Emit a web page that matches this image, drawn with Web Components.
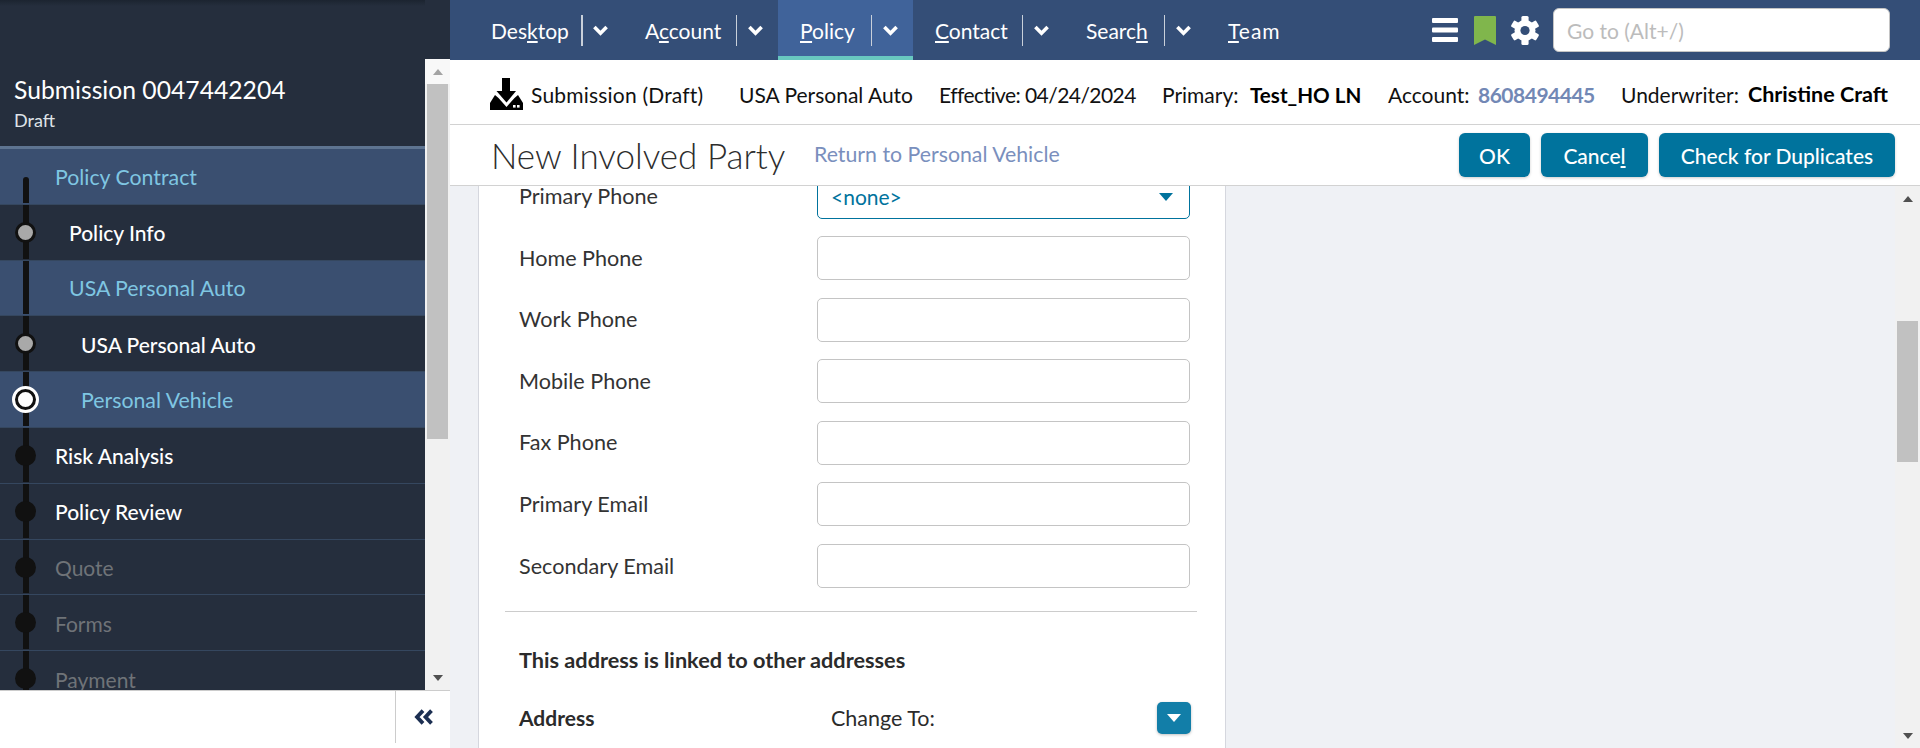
<!DOCTYPE html>
<html>
<head>
<meta charset="utf-8">
<title>New Involved Party</title>
<style>
    html, body{
        margin: 0;
        height: 748px;
        overflow: hidden;
        font-family: Lato, "Liberation Sans", sans-serif;
    }
</style>
</head>
<body>
<app-shell>
    <side-panel slot="side" title-text="Submission 0047442204" sub-text="Draft">
        <nav-step indent="0" state="group" top-cap>Policy Contract</nav-step>
        <nav-step indent="1" dot="done">Policy Info</nav-step>
        <nav-step indent="1" state="group">USA Personal Auto</nav-step>
        <nav-step indent="2" dot="done">USA Personal Auto</nav-step>
        <nav-step indent="2" state="group" dot="current">Personal Vehicle</nav-step>
        <nav-step indent="0" dot="todo">Risk Analysis</nav-step>
        <nav-step indent="0" dot="todo">Policy Review</nav-step>
        <nav-step indent="0" dot="todo" state="off">Quote</nav-step>
        <nav-step indent="0" dot="todo" state="off">Forms</nav-step>
        <nav-step indent="0" dot="todo" state="off">Payment</nav-step>
    </side-panel>

    <top-nav slot="nav">
        <nav-tab menu style="--w:76px"><span>Des<u>k</u>top</span></nav-tab>
        <nav-tab menu style="--w:77px"><span>A<u>c</u>count</span></nav-tab>
        <nav-tab menu active style="--w:57px"><span><u>P</u>olicy</span></nav-tab>
        <nav-tab menu style="--w:73px"><span><u>C</u>ontact</span></nav-tab>
        <nav-tab menu style="--w:64px"><span>Searc<u>h</u></span></nav-tab>
        <nav-tab style="--w:52px"><span style="letter-spacing:1px"><u>T</u>eam</span></nav-tab>
    </top-nav>

    <info-bar slot="info"></info-bar>

    <title-bar slot="title" heading="New Involved Party" link="Return to Personal Vehicle">
        <ui-button style="width:71px">OK</ui-button>
        <ui-button style="width:107px">Cance<u>l</u></ui-button>
        <ui-button style="width:236px">Check for Duplicates</ui-button>
    </title-bar>

    <form-area slot="main">
        <form-row label="Primary Phone" value="&lt;none&gt;" select></form-row>
        <form-row label="Home Phone"></form-row>
        <form-row label="Work Phone"></form-row>
        <form-row label="Mobile Phone"></form-row>
        <form-row label="Fax Phone"></form-row>
        <form-row label="Primary Email"></form-row>
        <form-row label="Secondary Email"></form-row>
    </form-area>
</app-shell>

<script>
// small helper, every element is the same: template -> open shadow root
function makeTemplate(html) {
    const t = document.createElement('template');
    t.innerHTML = html;
    return t;
}

const shellTpl = makeTemplate(`
    <style>
        :host{
            display: grid;
            grid-template-columns: 450px 1fr;
            width: 1920px;
            height: 748px;
            overflow: hidden;
        }
        .right{
            display: flex;
            flex-direction: column;
            height: 748px;
            min-width: 0;
        }
    </style>
    <slot name="side"></slot>
    <div class="right">
        <slot name="nav"></slot>
        <slot name="info"></slot>
        <slot name="title"></slot>
        <slot name="main"></slot>
    </div>
`);

class AppShell extends HTMLElement{
    constructor() {
        super();
        this.attachShadow({ mode: 'open' });
        this.shadowRoot.appendChild(shellTpl.content.cloneNode(true));
    }
}

const sideTpl = makeTemplate(`
    <style>
        :host{
            display: flex;
            flex-direction: column;
            height: 748px;
            width: 450px;
            background: #fff;
        }
        .top{
            display: grid;
            grid-template-columns: 425px 25px;
            height: 690px;
            background: #252e3d;
            overflow: hidden;
        }
        .left{
            height: 690px;
            overflow: hidden;
        }
        .head{
            height: 146px;
            box-sizing: content-box;
            border-bottom: 3px solid #5e7491;
            background: linear-gradient(#1c2430, #252e3d 6px);
            color: #fff;
            display: flex;
            flex-direction: column;
            justify-content: flex-end;
            padding-left: 14px;
        }
        .title{
            font-size: 24.7px;
            line-height: 32px;
            margin-bottom: 2px;
        }
        .sub{
            font-size: 18px;
            line-height: 24px;
            color: #dfe3e8;
            padding-bottom: 14px;
        }
        .gutter{
            margin-top: 59px;
            height: 631px;
        }
        .foot{
            flex: 1;
            border-top: 1px solid #ccc;
            display: flex;
            justify-content: flex-end;
        }
        .collapse{
            width: 55px;
            height: 52px;
            border-left: 1px solid #ccc;
            display: flex;
            align-items: center;
            padding-left: 18px;
            box-sizing: border-box;
        }
        svg{ display: block; }
    </style>
    <div class="top">
        <div class="left">
            <div class="head">
                <div class="title"></div>
                <div class="sub"></div>
            </div>
            <slot></slot>
        </div>
        <div class="gutter">
            <fake-scroll thumb-top="0" thumb-height="355" up-dim bottom-arrow></fake-scroll>
        </div>
    </div>
    <div class="foot">
        <div class="collapse">
            <svg width="20" height="16" viewBox="0 0 20 16" fill="none" stroke="#1c2f52" stroke-width="3.8">
                <polyline points="9,1.6 3,8 9,14.4"/>
                <polyline points="17.5,1.6 11.5,8 17.5,14.4"/>
            </svg>
        </div>
    </div>
`);

class SidePanel extends HTMLElement{
    constructor() {
        super();
        this.attachShadow({ mode: 'open' });
        this.shadowRoot.appendChild(sideTpl.content.cloneNode(true));
        this.shadowRoot.querySelector('.title').innerText = this.getAttribute('title-text');
        this.shadowRoot.querySelector('.sub').innerText = this.getAttribute('sub-text');
    }
}

const stepTpl = makeTemplate(`
    <style>
        :host{
            display: flex;
            align-items: center;
            position: relative;
            height: 54.8px;
            border-bottom: 1px solid #35475f;
            background: #252e3d;
            color: #fff;
            font-size: 21px;
            font-weight: 500;
            padding-left: 55px;
            box-sizing: content-box;
        }
        :host([indent="1"]){ padding-left: 69px; }
        :host([indent="2"]){ padding-left: 81px; }
        :host([state="group"]){
            background: #3a4f70;
            color: #7fc6e2;
            font-weight: 400;
            font-size: 21.3px;
        }
        :host([state="off"]){
            color: #6f7378;
            font-weight: 400;
        }
        /* the timeline line and its dot lie over the row */
        .bar{
            position: absolute;
            left: 23px;
            top: 0;
            bottom: 1px;
            width: 6px;
            background: #111;
        }
        :host([top-cap]) .bar{
            top: 28px;
            border-radius: 3px 3px 0 0;
        }
        .dot{
            display: none;
            position: absolute;
            left: 15px;
            top: 17px;
            width: 21px;
            height: 21px;
            border-radius: 50%;
            background: #111;
            box-sizing: border-box;
        }
        :host([dot]) .dot{ display: block; }
        :host([dot="done"]) .dot{
            background: #a9a9a9;
            border: 3px solid #111;
        }
        :host([dot="current"]) .dot{
            left: 12px;
            top: 14px;
            width: 27px;
            height: 27px;
            background: #fff;
            border: 3px solid #fff;
        }
        :host([dot="current"]) .dot::after{
            content: "";
            display: block;
            width: 21px;
            height: 21px;
            box-sizing: border-box;
            border-radius: 50%;
            border: 3px solid #111;
            background: #fff;
        }
        .txt{ padding-top: 1px; }
    </style>
    <div class="bar"></div>
    <div class="dot"></div>
    <div class="txt"><slot></slot></div>
`);

class NavStep extends HTMLElement{
    constructor() {
        super();
        this.attachShadow({ mode: 'open' });
        this.shadowRoot.appendChild(stepTpl.content.cloneNode(true));
    }
}

const scrollTpl = makeTemplate(`
    <style>
        :host{
            display: flex;
            flex-direction: column;
            height: 100%;
            width: 25px;
            background: #f1f1f1;
        }
        .btn{
            height: 25px;
            display: flex;
            align-items: center;
            justify-content: center;
            flex: none;
            color: #505050;
        }
        .thumb{
            width: 21px;
            margin-left: 2px;
            background: #c1c1c1;
            flex: none;
        }
        .fill{ flex: 1; }
        .tri{
            width: 0;
            height: 0;
            border-left: 5.5px solid transparent;
            border-right: 5.5px solid transparent;
            border-bottom: 6px solid #505050;
        }
        .tri.down{
            border-bottom: 0;
            border-top: 6px solid #505050;
        }
        :host([up-dim]) .up{ border-bottom-color: #a3a3a3; }
        :host([up-dim]) .first{ background: #f8f8f8; }
    </style>
    <div class="btn first"><div class="tri up"></div></div>
    <div class="thumb"></div>
    <div class="fill"></div>
    <div class="btn last"><div class="tri down"></div></div>
`);

class FakeScroll extends HTMLElement{
    constructor() {
        super();
        this.attachShadow({ mode: 'open' });
        this.shadowRoot.appendChild(scrollTpl.content.cloneNode(true));
        const thumb = this.shadowRoot.querySelector('.thumb');
        thumb.style.marginTop = this.getAttribute('thumb-top') + 'px';
        thumb.style.height = this.getAttribute('thumb-height') + 'px';
    }
}

const navTpl = makeTemplate(`
    <style>
        :host{
            display: flex;
            align-items: stretch;
            height: 60px;
            flex: none;
            background: #344e77;
            padding-left: 19px;
            color: #fff;
        }
        .tabs{ display: flex; flex: 1; }
        .tools{
            display: flex;
            align-items: center;
            padding-right: 30px;
        }
        .ham{ margin-right: 16px; }
        .mark{ margin-right: 15px; }
        .gear{ margin-right: 14px; }
        svg{ display: block; }
        input{
            width: 337px;
            height: 44px;
            box-sizing: border-box;
            border: 1px solid #c4c4c4;
            border-radius: 6px;
            background: #fff;
            padding: 0 13px;
            font: 400 21px Lato, "Liberation Sans", sans-serif;
            outline: none;
        }
        input::placeholder{ color: #bcbcbc; opacity: 1; }
    </style>
    <div class="tabs"><slot></slot></div>
    <div class="tools">
        <svg class="ham" width="26" height="24" viewBox="0 0 26 24" fill="#fff">
            <rect y="0" width="26" height="5" rx="1"/>
            <rect y="9.5" width="26" height="5" rx="1"/>
            <rect y="19" width="26" height="5" rx="1"/>
        </svg>
        <svg class="mark" width="22" height="29" viewBox="0 0 22 29">
            <path d="M1 0H21a1 1 0 0 1 1 1V29L11 23.5 0 29V1a1 1 0 0 1 1-1Z" fill="#80b64c"/>
        </svg>
        <svg class="gear" width="28" height="29" viewBox="-14 -14.5 28 29">
            <g fill="#fff">
                <circle r="10.5"/>
                <rect x="-3.6" y="-14.5" width="7.2" height="29" rx="1.5"/>
                <rect x="-3.6" y="-14.5" width="7.2" height="29" rx="1.5" transform="rotate(60)"/>
                <rect x="-3.6" y="-14.5" width="7.2" height="29" rx="1.5" transform="rotate(120)"/>
            </g>
            <circle r="4.6" fill="#344e77"/>
        </svg>
        <input placeholder="Go to (Alt+/)">
    </div>
`);

class TopNav extends HTMLElement{
    constructor() {
        super();
        this.attachShadow({ mode: 'open' });
        this.shadowRoot.appendChild(navTpl.content.cloneNode(true));
    }
}

const tabTpl = makeTemplate(`
    <style>
        :host{
            display: flex;
            align-items: center;
            box-sizing: border-box;
            height: 60px;
            padding: 0 15px 0 22px;
            font-size: 21px;
            font-weight: 400;
            color: #fff;
        }
        :host([active]){
            background: #40639a;
            box-shadow: inset 0 -4px 0 #68c8c0;
        }
        ::slotted(span){
            display: block;
            width: var(--w);
            white-space: nowrap;
        }
        .more{
            display: none;
            align-items: center;
            height: 31px;
            margin-left: 14px;
            padding-left: 11px;
            border-left: 1px solid #c9d0da;
        }
        :host([menu]) .more{ display: flex; }
        :host(:first-child) .more{
            border-left-width: 2px;
            padding-left: 10px;
        }
        svg{ display: block; }
    </style>
    <slot></slot>
    <div class="more">
        <svg width="15" height="11" viewBox="0 0 15 11" fill="none" stroke="#fff" stroke-width="3.6">
            <polyline points="1.4,2 7.5,8.2 13.6,2"/>
        </svg>
    </div>
`);

class NavTab extends HTMLElement{
    constructor() {
        super();
        this.attachShadow({ mode: 'open' });
        this.shadowRoot.appendChild(tabTpl.content.cloneNode(true));
    }
}

const infoTpl = makeTemplate(`
    <style>
        :host{
            display: flex;
            align-items: center;
            flex: none;
            height: 60px;
            padding-top: 4px;
            box-sizing: content-box;
            border-bottom: 1px solid #d2d2d2;
            background: #fff;
            padding-left: 40px;
            font-size: 21px;
            color: #111;
            white-space: nowrap;
        }
        svg{ display: block; margin-right: 8px; }
        span{ display: block; }
        b{ font-weight: 700; color: #000; font-size: 20.6px; }
        a{ color: #7288b5; font-weight: 700; text-decoration: none; letter-spacing: -.5px; }
        .s1{ width: 208px; letter-spacing: .2px; }
        .s2{ width: 200px; }
        .s3{ width: 223px; letter-spacing: -.55px; }
        .s4{ width: 88px; }
        .s5{ width: 138px; }
        .s6{ width: 90px; }
        .s7{ width: 143px; }
        .s8{ width: 127px; }
        .s9 b{ font-size: 21.5px; }
    </style>
    <svg width="33" height="32" viewBox="0 0 33 32">
        <rect x="12" y="0" width="8" height="14" fill="#000"/>
        <polygon points="6.5,13 26,13 16.5,24.5" fill="#000"/>
        <path d="M0 25L5 17 8.5 20 16.5 29 24.5 20 28 17 33 25V32H0Z" fill="#000"/>
        <rect x="23" y="27" width="2.6" height="2.6" fill="#fff"/>
        <rect x="27" y="27" width="2.6" height="2.6" fill="#fff"/>
    </svg>
    <span class="s1">Submission (Draft)</span>
    <span class="s2">USA Personal Auto</span>
    <span class="s3">Effective: 04/24/2024</span>
    <span class="s4">Primary:</span>
    <span class="s5"><b>Test_HO LN</b></span>
    <span class="s6">Account:</span>
    <span class="s7"><a>8608494445</a></span>
    <span class="s8">Underwriter:</span>
    <span class="s9"><b>Christine Craft</b></span>
`);

class InfoBar extends HTMLElement{
    constructor() {
        super();
        this.attachShadow({ mode: 'open' });
        this.shadowRoot.appendChild(infoTpl.content.cloneNode(true));
    }
}

const titleTpl = makeTemplate(`
    <style>
        :host{
            display: flex;
            align-items: center;
            flex: none;
            height: 60px;
            box-sizing: content-box;
            border-bottom: 1px solid #d2d2d2;
            background: #fff;
            padding: 0 25px 0 41px;
        }
        h1{
            margin: 0;
            font-size: 35px;
            font-weight: 300;
            color: #2d2d2d;
            width: 323px;
            white-space: nowrap;
        }
        a{
            flex: 1;
            font-size: 21.3px;
            color: #7a8fbd;
            margin-top: -3px;
        }
        .btns{
            display: flex;
            gap: 11px;
        }
    </style>
    <h1></h1>
    <a></a>
    <div class="btns"><slot></slot></div>
`);

class TitleBar extends HTMLElement{
    constructor() {
        super();
        this.attachShadow({ mode: 'open' });
        this.shadowRoot.appendChild(titleTpl.content.cloneNode(true));
        this.shadowRoot.querySelector('h1').innerText = this.getAttribute('heading');
        this.shadowRoot.querySelector('a').innerText = this.getAttribute('link');
    }
}

const btnTpl = makeTemplate(`
    <style>
        :host{
            display: flex;
            align-items: center;
            justify-content: center;
            height: 44px;
            border-radius: 6px;
            background: #00739d;
            color: #fff;
            font-size: 21px;
            font-weight: 500;
            box-shadow: 0 1px 3px rgba(0,0,0,.2);
        }
        .txt{ white-space: nowrap; }
    </style>
    <div class="txt"><slot></slot></div>
`);

class UiButton extends HTMLElement{
    constructor() {
        super();
        this.attachShadow({ mode: 'open' });
        this.shadowRoot.appendChild(btnTpl.content.cloneNode(true));
    }
}

const areaTpl = makeTemplate(`
    <style>
        :host{
            display: grid;
            grid-template-columns: 1fr 25px;
            flex: 1;
            min-height: 0;
            background: #eff1f5;
            overflow: hidden;
        }
        .scroller{
            padding-left: 28px;
            overflow: hidden;
        }
        .card{
            width: 748px;
            box-sizing: border-box;
            height: 620px;
            background: #fff;
            border-left: 1px solid #d5d7de;
            border-right: 1px solid #d5d7de;
            padding: 0 26px;
            /* the form is scrolled, its first row is cut by the header */
            margin-top: -11.5px;
        }
        hr{
            border: 0;
            border-top: 1px solid #ccc;
            margin: 22.5px 0 0 0;
            width: 692px;
        }
        .linked{
            padding: 35px 0 0 14px;
            font-size: 21.7px;
            font-weight: 700;
            color: #2b2b2b;
            line-height: 26px;
        }
        .addr{
            display: flex;
            align-items: center;
            margin-top: 29px;
            height: 32px;
            padding-left: 14px;
            font-size: 21.5px;
            color: #2b2b2b;
        }
        .addr b{ width: 312px; font-weight: 700; font-size: 21px; }
        .addr span{ flex: 1; }
        .pick{
            width: 34px;
            height: 32px;
            border-radius: 5px;
            background: #127ea8;
            display: flex;
            align-items: center;
            justify-content: center;
            margin-right: 8px;
            box-shadow: 0 1px 3px rgba(0,0,0,.25);
        }
        .pick i{
            width: 0;
            height: 0;
            border-left: 7px solid transparent;
            border-right: 7px solid transparent;
            border-top: 8px solid #fff;
        }
    </style>
    <div class="scroller">
        <div class="card">
            <div class="rows"><slot></slot></div>
            <hr>
            <div class="linked">This address is linked to other addresses</div>
            <div class="addr">
                <b>Address</b>
                <span>Change To:</span>
                <div class="pick"><i></i></div>
            </div>
        </div>
    </div>
    <fake-scroll thumb-top="110" thumb-height="141"></fake-scroll>
`);

class FormArea extends HTMLElement{
    constructor() {
        super();
        this.attachShadow({ mode: 'open' });
        this.shadowRoot.appendChild(areaTpl.content.cloneNode(true));
    }
}

const rowTpl = makeTemplate(`
    <style>
        :host{
            display: flex;
            align-items: center;
            height: 44px;
            margin-bottom: 17.6px;
            padding-left: 14px;
            font-size: 21.6px;
            color: #333;
        }
        label{ width: 298px; flex: none; margin-top: -1px; }
        .box{
            width: 373px;
            height: 44px;
            box-sizing: border-box;
            border: 1px solid #c4c4c4;
            border-radius: 5px;
            display: flex;
            align-items: center;
            justify-content: space-between;
            padding: 0 16px 0 13px;
            color: #00739d;
            font-size: 21px;
        }
        :host([select]) .box{ border-color: #00739d; }
        .arrow{
            display: none;
            width: 0;
            height: 0;
            border-left: 7px solid transparent;
            border-right: 7px solid transparent;
            border-top: 8px solid #00739d;
        }
        :host([select]) .arrow{ display: block; }
    </style>
    <label></label>
    <div class="box"><span></span><i class="arrow"></i></div>
`);

class FormRow extends HTMLElement{
    constructor() {
        super();
        this.attachShadow({ mode: 'open' });
        this.shadowRoot.appendChild(rowTpl.content.cloneNode(true));
        this.shadowRoot.querySelector('label').innerText = this.getAttribute('label');
        this.shadowRoot.querySelector('span').innerText = this.getAttribute('value') || '';
    }
}

window.customElements.define('fake-scroll', FakeScroll);
window.customElements.define('nav-step', NavStep);
window.customElements.define('side-panel', SidePanel);
window.customElements.define('nav-tab', NavTab);
window.customElements.define('top-nav', TopNav);
window.customElements.define('info-bar', InfoBar);
window.customElements.define('ui-button', UiButton);
window.customElements.define('title-bar', TitleBar);
window.customElements.define('form-row', FormRow);
window.customElements.define('form-area', FormArea);
window.customElements.define('app-shell', AppShell);
</script>
</body>
</html>
